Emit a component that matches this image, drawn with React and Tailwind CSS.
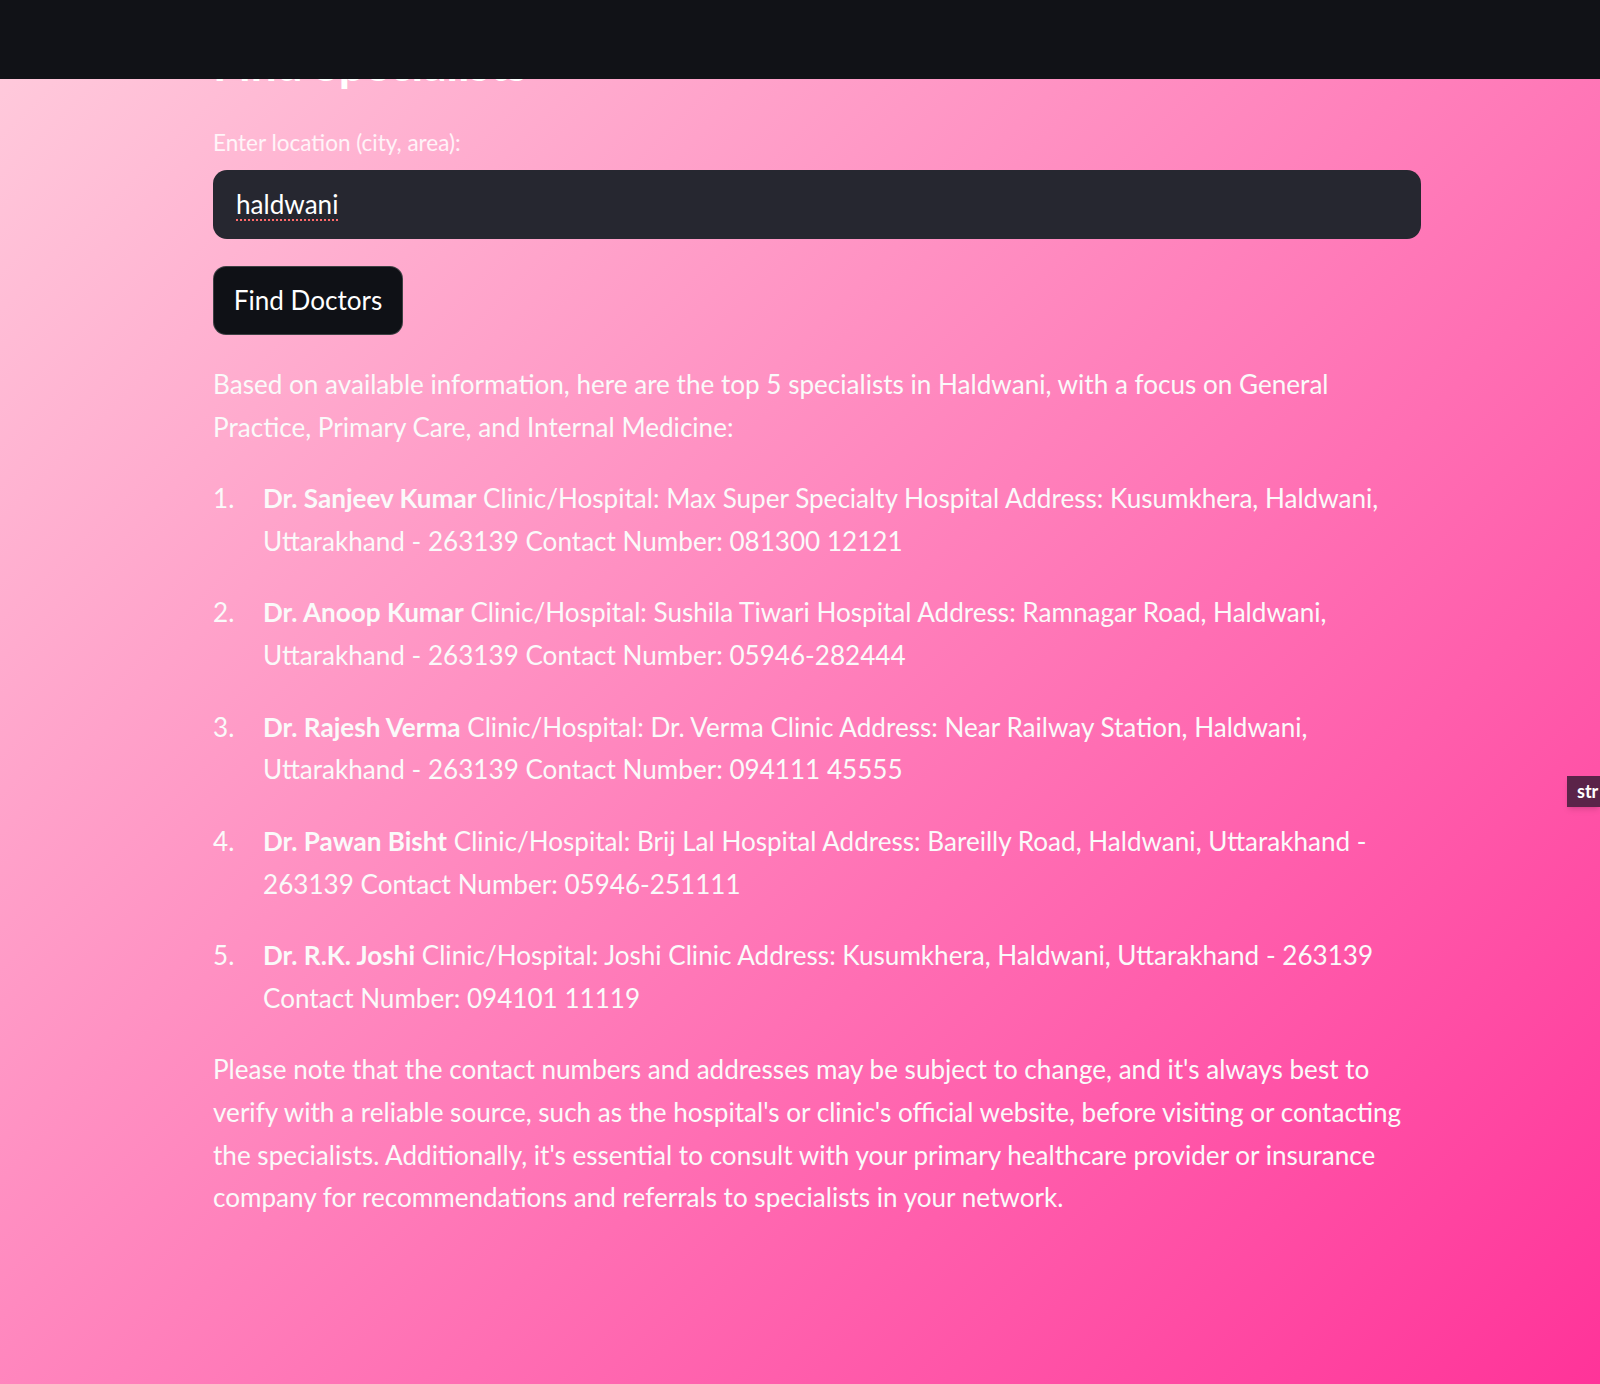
const doctors = [
  {
    name: 'Dr. Sanjeev Kumar',
    first: ' Clinic/Hospital: Max Super Specialty Hospital Address: Kusumkhera, Haldwani,',
    second: 'Uttarakhand - 263139 Contact Number: 081300 12121',
  },
  {
    name: 'Dr. Anoop Kumar',
    first: ' Clinic/Hospital: Sushila Tiwari Hospital Address: Ramnagar Road, Haldwani,',
    second: 'Uttarakhand - 263139 Contact Number: 05946-282444',
  },
  {
    name: 'Dr. Rajesh Verma',
    first: ' Clinic/Hospital: Dr. Verma Clinic Address: Near Railway Station, Haldwani,',
    second: 'Uttarakhand - 263139 Contact Number: 094111 45555',
  },
  {
    name: 'Dr. Pawan Bisht',
    first: ' Clinic/Hospital: Brij Lal Hospital Address: Bareilly Road, Haldwani, Uttarakhand -',
    second: '263139 Contact Number: 05946-251111',
  },
  {
    name: 'Dr. R.K. Joshi',
    first: ' Clinic/Hospital: Joshi Clinic Address: Kusumkhera, Haldwani, Uttarakhand - 263139',
    second: 'Contact Number: 094101 11119',
  },
];

const note = [
  "Please note that the contact numbers and addresses may be subject to change, and it's always best to",
  "verify with a reliable source, such as the hospital's or clinic's official website, before visiting or contacting",
  "the specialists. Additionally, it's essential to consult with your primary healthcare provider or insurance",
  'company for recommendations and referrals to specialists in your network.',
];

export default function App() {
  return (
    <div
      className="relative w-[1600px] h-[1384px] overflow-hidden bg-[linear-gradient(135deg,#ffcddd_0%,#ff3399_100%)] text-[#fafafa]"
      style={{ fontFamily: 'Lato, "Open Sans", sans-serif' }}
    >
      {/* top bar sits over the scrolled content */}
      <div className="absolute top-0 left-0 right-0 h-[79px] bg-[#111217] z-10"></div>

      <div className="ml-[213px] w-[1208px] pt-[36px]">
        <h3 className="text-[46px] leading-[56px] font-bold text-white">Find Specialists</h3>

        <label className="block mt-[35px] text-[22.5px] leading-[32px] text-white/85">
          Enter location (city, area):
        </label>
        <div className="mt-[11px] h-[69px] rounded-[14px] bg-[#262730] flex items-center pl-[23px]">
          <span className="text-[26.1px] text-white underline decoration-dotted decoration-[#ff6b6b] decoration-2 underline-offset-[6px]">
            haldwani
          </span>
        </div>

        <button className="mt-[27px] h-[69px] w-[190px] rounded-[13px] bg-[#0f1116] border border-white/20 text-[26.1px] text-white">
          Find Doctors
        </button>

        <div className="mt-[28px] text-[26.1px] leading-[42.67px] flex flex-col gap-[28.6px]">
          <p>
            <span className="block whitespace-nowrap">
              Based on available information, here are the top 5 specialists in Haldwani, with a focus on General
            </span>
            <span className="block whitespace-nowrap">Practice, Primary Care, and Internal Medicine:</span>
          </p>

          <ol className="flex flex-col gap-[29px]">
            {doctors.map((d, i) => (
              <li key={d.name} className="flex">
                <span className="w-[50px] shrink-0">{i + 1}.</span>
                <div>
                  <span className="block whitespace-nowrap">
                    <strong className="font-bold">{d.name}</strong>
                    {d.first}
                  </span>
                  <span className="block whitespace-nowrap">{d.second}</span>
                </div>
              </li>
            ))}
          </ol>

          <p>
            {note.map((line) => (
              <span key={line} className="block whitespace-nowrap">
                {line}
              </span>
            ))}
          </p>
        </div>
      </div>

      {/* side badge at the window edge */}
      <div className="absolute left-[1567px] right-0 top-[776px] h-[31px] pl-[10px] flex items-center bg-[#5b2449] text-white text-[18px] font-bold shadow-md whitespace-nowrap">
        str
      </div>
    </div>
  );
}
